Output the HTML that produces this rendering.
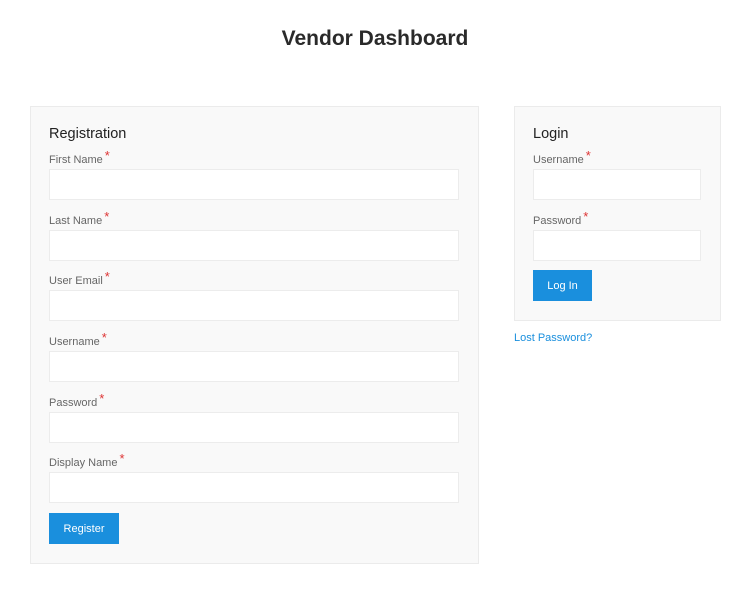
<!DOCTYPE html>
<html><head><meta charset="utf-8"><style>
*{box-sizing:border-box;margin:0;padding:0}
body{width:750px;height:593px;background:#fff;font-family:"Liberation Sans",sans-serif;position:relative;overflow:hidden}
h1{position:absolute;top:27px;left:0;width:750px;text-align:center;font-size:21px;font-weight:bold;color:#2a2a2a}
.box{position:absolute;background:#f9f9f9;border:1px solid #ebebeb}
.h{position:absolute;font-size:14.5px;color:#222}
.l{position:absolute;font-size:11px;color:#666}
.l span{color:#d33;font-size:13px;position:relative;top:-3px;margin-left:2px}
.i{position:absolute;height:31px;background:#fff;border:1px solid #ececec}
.b{position:absolute;height:31px;background:#1a8fdd;color:#fff;font-size:11px;text-align:center;line-height:32px}
.a{position:absolute;font-size:11px;color:#1a8fdd}
</style></head><body>
<h1>Vendor Dashboard</h1>
<div class="box" style="left:30px;top:106px;width:449px;height:458px"></div>
<div class="h" style="left:49px;top:126px">Registration</div>
<div class="l" style="left:49px;top:151px">First Name<span>*</span></div>
<div class="i" style="left:49px;top:169px;width:410px"></div>
<div class="l" style="left:49px;top:212px">Last Name<span>*</span></div>
<div class="i" style="left:49px;top:230px;width:410px"></div>
<div class="l" style="left:49px;top:272px">User Email<span>*</span></div>
<div class="i" style="left:49px;top:290px;width:410px"></div>
<div class="l" style="left:49px;top:333px">Username<span>*</span></div>
<div class="i" style="left:49px;top:351px;width:410px"></div>
<div class="l" style="left:49px;top:394px">Password<span>*</span></div>
<div class="i" style="left:49px;top:412px;width:410px"></div>
<div class="l" style="left:49px;top:454px">Display Name<span>*</span></div>
<div class="i" style="left:49px;top:472px;width:410px"></div>
<div class="b" style="left:49px;top:513px;width:70px">Register</div>
<div class="box" style="left:514px;top:106px;width:207px;height:215px"></div>
<div class="h" style="left:533px;top:126px">Login</div>
<div class="l" style="left:533px;top:151px">Username<span>*</span></div>
<div class="i" style="left:533px;top:169px;width:168px"></div>
<div class="l" style="left:533px;top:212px">Password<span>*</span></div>
<div class="i" style="left:533px;top:230px;width:168px"></div>
<div class="b" style="left:533px;top:270px;width:59px">Log In</div>
<div class="a" style="left:514px;top:332px">Lost Password?</div>
</body></html>
